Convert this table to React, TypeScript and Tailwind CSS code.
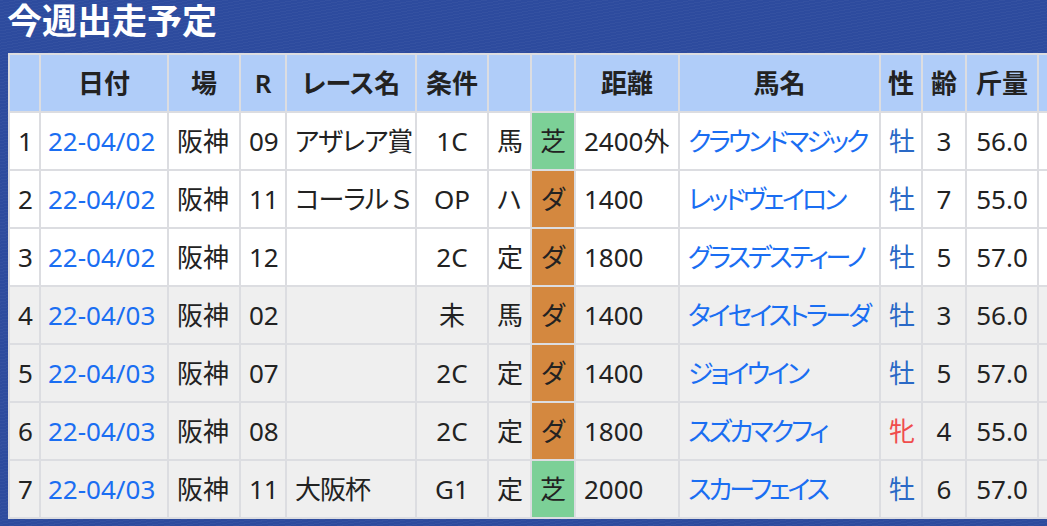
type Race = {
  no: number;
  date: string;
  place: string;
  r: string;
  name: string;
  cls: string;
  cond: string;
  surface: '芝' | 'ダ';
  dist: string;
  horse: string;
  sex: '牡' | '牝';
  age: number;
  weight: string;
};

const races: Race[] = [
  { no: 1, date: '22-04/02', place: '阪神', r: '09', name: 'アザレア賞', cls: '1C', cond: '馬', surface: '芝', dist: '2400外', horse: 'クラウンドマジック', sex: '牡', age: 3, weight: '56.0' },
  { no: 2, date: '22-04/02', place: '阪神', r: '11', name: 'コーラルＳ', cls: 'OP', cond: 'ハ', surface: 'ダ', dist: '1400', horse: 'レッドヴェイロン', sex: '牡', age: 7, weight: '55.0' },
  { no: 3, date: '22-04/02', place: '阪神', r: '12', name: '', cls: '2C', cond: '定', surface: 'ダ', dist: '1800', horse: 'グラスデスティーノ', sex: '牡', age: 5, weight: '57.0' },
  { no: 4, date: '22-04/03', place: '阪神', r: '02', name: '', cls: '未', cond: '馬', surface: 'ダ', dist: '1400', horse: 'タイセイストラーダ', sex: '牡', age: 3, weight: '56.0' },
  { no: 5, date: '22-04/03', place: '阪神', r: '07', name: '', cls: '2C', cond: '定', surface: 'ダ', dist: '1400', horse: 'ジョイウイン', sex: '牡', age: 5, weight: '57.0' },
  { no: 6, date: '22-04/03', place: '阪神', r: '08', name: '', cls: '2C', cond: '定', surface: 'ダ', dist: '1800', horse: 'スズカマクフィ', sex: '牝', age: 4, weight: '55.0' },
  { no: 7, date: '22-04/03', place: '阪神', r: '11', name: '大阪杯', cls: 'G1', cond: '定', surface: '芝', dist: '2000', horse: 'スカーフェイス', sex: '牡', age: 6, weight: '57.0' },
];

const th = 'h-[56px] bg-[#b0cdf9] p-0 text-center font-semibold text-[#222]';
const td = 'h-[56px] p-0 px-2 whitespace-nowrap';

// full-width latin keeps its side bearings, like the original page
function RaceName({ name }: { name: string }) {
  const m = name.match(/^(.*?)([Ａ-Ｚ]+)$/);
  if (!m) return <>{name}</>;
  return (
    <>
      {m[1]}
      <span className="[font-feature-settings:normal]">{m[2]}</span>
    </>
  );
}

export default function App() {
  return (
    <div
      className="h-[526px] w-[1047px] overflow-hidden bg-[#2d4b9e] bg-[repeating-linear-gradient(170deg,rgba(255,255,255,0.03)_0px,rgba(255,255,255,0.03)_1px,transparent_1px,transparent_3px)]"
      style={{ fontFamily: '"Noto Sans", "Noto Sans CJK JP", sans-serif' }}
    >
      <h1 className="pl-[7px] pb-[12px] text-[35px] leading-[41px] font-bold text-white">今週出走予定</h1>
      <table className="ml-2 w-[1113px] table-fixed border-separate border-spacing-[2px] bg-[#dcdde1] text-[26px] leading-none text-[#222] [font-feature-settings:'palt']">
        <thead>
          <tr>
            <th className={`${th} w-[29px]`}></th>
            <th className={`${th} w-[126px]`}>日付</th>
            <th className={`${th} w-[70px]`}>場</th>
            <th className={`${th} w-[44px]`}>R</th>
            <th className={`${th} w-[128px]`}>レース名</th>
            <th className={`${th} w-[70px]`}>条件</th>
            <th className={`${th} w-[41px]`}></th>
            <th className={`${th} w-[42px]`}></th>
            <th className={`${th} w-[102px]`}>距離</th>
            <th className={`${th} w-[199px]`}>馬名</th>
            <th className={`${th} w-[40px]`}>性</th>
            <th className={`${th} w-[42px]`}>齢</th>
            <th className={`${th} w-[70px]`}>斤量</th>
            <th className={`${th} w-[80px]`}></th>
          </tr>
        </thead>
        <tbody>
          {races.map((r) => {
            const bg = r.date === '22-04/02' ? 'bg-white' : 'bg-[#efefef]';
            return (
              <tr key={r.no}>
                <td className={`${td} ${bg} px-0 text-center`}>{r.no}</td>
                <td className={`${td} ${bg} pl-[7px] text-[#1a6ef2]`}>{r.date}</td>
                <td className={`${td} ${bg}`}>{r.place}</td>
                <td className={`${td} ${bg} px-0 text-center`}>{r.r}</td>
                <td className={`${td} ${bg} tracking-[-1px]`}>
                  <RaceName name={r.name} />
                </td>
                <td className={`${td} ${bg} text-center`}>{r.cls}</td>
                <td className={`${td} ${bg} px-0 text-center`}>{r.cond}</td>
                <td
                  className={`${td} px-0 text-center ${
                    r.surface === '芝' ? 'bg-[#7cd097]' : 'bg-[#d4883f]'
                  }`}
                >
                  {r.surface}
                </td>
                <td className={`${td} ${bg}`}>{r.dist}</td>
                <td className={`${td} ${bg} text-[#1a6ef2] tracking-[-3px]`}>{r.horse}</td>
                <td
                  className={`${td} ${bg} px-0 text-center ${
                    r.sex === '牡' ? 'text-[#2a69c6]' : 'text-[#f04d4d]'
                  }`}
                >
                  {r.sex}
                </td>
                <td className={`${td} ${bg} px-0 text-center`}>{r.age}</td>
                <td className={`${td} ${bg} px-0 text-center`}>{r.weight}</td>
                <td className={`${td} ${bg}`}></td>
              </tr>
            );
          })}
        </tbody>
      </table>
    </div>
  );
}
